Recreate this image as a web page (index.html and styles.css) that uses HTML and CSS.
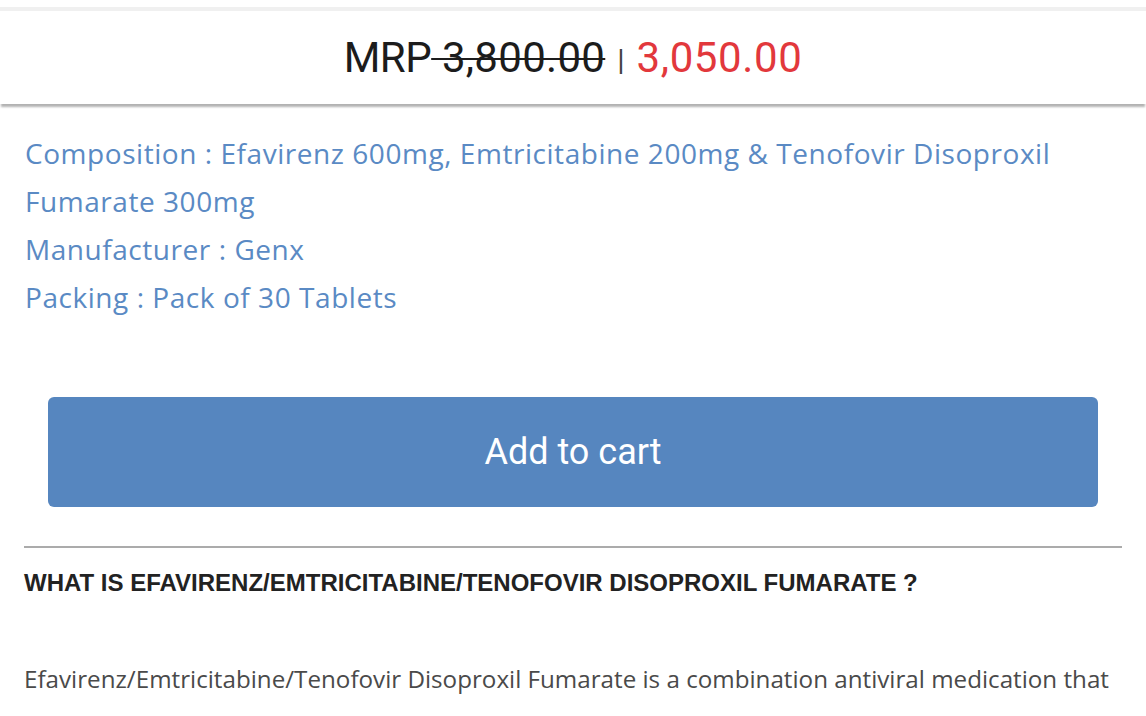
FILE: index.html
```html
<!DOCTYPE html>
<html>
<head>
<meta charset="utf-8">
<link rel="stylesheet" href="styles.css">
</head>
<body>
<div class="page">
  <div class="price-bar">
    <span class="mrp">MRP<span class="old"> 3,800.00</span></span>
    <span class="sep">|</span>
    <span class="new">3,050.00</span>
  </div>
  <div class="details">
    <p>Composition : Efavirenz 600mg, Emtricitabine 200mg &amp; Tenofovir Disoproxil Fumarate 300mg</p>
    <p>Manufacturer : Genx</p>
    <p>Packing : Pack of 30 Tablets</p>
  </div>
  <div class="cart-wrap">
    <button class="cart">Add to cart</button>
  </div>
  <div class="info">
    <h2>WHAT IS EFAVIRENZ/EMTRICITABINE/TENOFOVIR DISOPROXIL FUMARATE ?</h2>
    <p>Efavirenz/Emtricitabine/Tenofovir Disoproxil Fumarate is a combination antiviral medication that helps to control HIV infection.</p>
  </div>
</div>
</body>
</html>
```

FILE: styles.css
```css
html, body {
  margin: 0;
  padding: 0;
  background: #ffffff;
}
body {
  font-family: "Open Sans", "Liberation Sans", Arial, sans-serif;
  overflow: hidden;
}
.page {
  padding-top: 7px;
}
.price-bar {
  border-top: 4px solid #f0f0f0;
  height: 93px;
  display: flex;
  align-items: center;
  justify-content: center;
  font-family: Roboto, "Liberation Sans", sans-serif;
  font-size: 42px;
  color: #1c1c1c;
  box-shadow: 0 4px 2px -1px rgba(0, 0, 0, 0.3);
  position: relative;
}
.mrp {
  letter-spacing: -0.5px;
}
.old {
  text-decoration: line-through;
  text-decoration-thickness: 2px;
  letter-spacing: 0.3px;
}
.sep {
  font-size: 30px;
  color: #444;
  margin: 0 12px;
  position: relative;
  top: 2px;
}
.new {
  color: #e2383c;
  letter-spacing: 0.6px;
}
.details {
  margin-top: 25px;
  padding: 0 60px 0 25px;
  color: #5a8ac4;
  font-size: 28px;
  line-height: 48px;
  letter-spacing: 0.55px;
}
.details p {
  margin: 0;
}
.cart-wrap {
  padding: 76px 48px 0 48px;
}
.cart {
  display: block;
  width: 100%;
  height: 110px;
  border: none;
  border-radius: 6px;
  background: #5686bf;
  color: #ffffff;
  font-family: Roboto, "Liberation Sans", sans-serif;
  font-size: 36px;
  cursor: pointer;
}
.info {
  margin: 39px 24px 0 24px;
  border-top: 2px solid #ababab;
}
.info h2 {
  margin: 20px 0 0 0;
  font-family: "Liberation Sans", Arial, sans-serif;
  font-size: 24px;
  font-weight: bold;
  color: #222;
  line-height: 30px;
}
.info p {
  margin: 57px 0 0 0;
  font-size: 24.2px;
  color: #4a4a4a;
  line-height: 48px;
}
```
